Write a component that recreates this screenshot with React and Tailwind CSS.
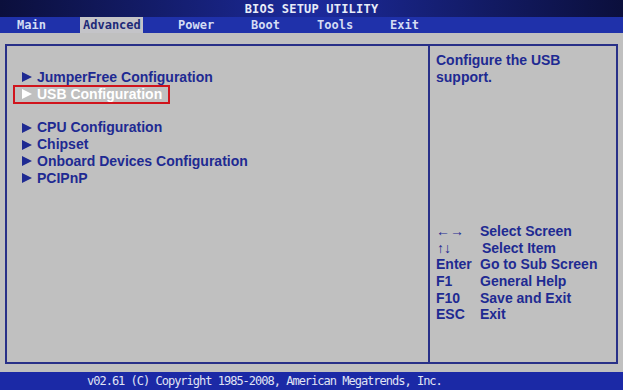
import React from 'react';

const tabs = [
    { name: 'Main', pl: 'pl-[17px]', w: 'w-[80px]' },
    { name: 'Advanced', pl: 'pl-[3px]', w: 'w-[63px]', active: true },
    { name: 'Power', pl: 'pl-[35px]', w: 'w-[108px]' },
    { name: 'Boot', pl: 'pl-0', w: 'w-[66px]' },
    { name: 'Tools', pl: 'pl-0', w: 'w-[73px]' },
    { name: 'Exit', pl: 'pl-0', w: 'w-[60px]' },
];

const Arrow = ({ color }) => (
    <svg width="10" height="10" viewBox="0 0 10 10" className="shrink-0">
        <polygon points="0,0 10,5 0,10" fill={color} />
    </svg>
);

const MenuItem = ({ label, selected }) => (
    <div className="h-[16.8px] flex items-center">
        {selected ? (
            <div className="flex items-center gap-[5px] ml-[-9px] pl-[7px] pr-[6px] h-[19px] border-2 border-[#d0141c] text-white">
                <Arrow color="#ffffff" />
                <span>{label}</span>
            </div>
        ) : (
            <div className="flex items-center gap-[5px]">
                <Arrow color="#1e2a92" />
                <span>{label}</span>
            </div>
        )}
    </div>
);

const keys = [
    ['←→', 'Select Screen', 'font-normal text-[14px]'],
    ['↑↓', 'Select Item', 'font-normal text-[14px] pl-[1px]'],
    ['Enter', 'Go to Sub Screen', ''],
    ['F1', 'General Help', ''],
    ['F10', 'Save and Exit', ''],
    ['ESC', 'Exit', ''],
];

export default function App() {
    const mono = { fontFamily: '"DejaVu Sans Mono", monospace' };
    return (
        <div className="w-[623px] h-[390px] flex flex-col bg-[#c0c0c0] overflow-hidden">
            {/* title */}
            <div
                className="h-[17px] flex items-center justify-center bg-linear-to-r from-[#0b0f3c] via-[#1c2a9c] to-[#0b0f3c] text-[#e8ecf8] font-bold text-[12px] tracking-[0.2px]"
                style={mono}
            >
                BIOS SETUP UTILITY
            </div>
            {/* tabs */}
            <div className="h-[16px] flex bg-[#1f31aa] text-[12px] font-bold" style={mono}>
                {tabs.map((t) => (
                    <div
                        key={t.name}
                        className={`${t.w} ${t.pl} h-full flex items-center ${t.active ? 'bg-[#c4c4c8] text-[#1e2a78]' : 'text-[#d4dcf4]'}`}
                    >
                        {t.name}
                    </div>
                ))}
            </div>
            {/* main */}
            <div className="flex-1 pt-[11px] pl-[5px] pr-[5px] pb-[8px]">
                <div
                    className="h-full flex border-2 border-[#283088] text-[#1e2a92] font-bold text-[14px]"
                    style={{ fontFamily: '"Liberation Sans", Arial, sans-serif' }}
                >
                    <div className="w-[423px] border-r-2 border-[#283088] pt-[23px] pl-[15px] leading-[17px]">
                        <MenuItem label="JumperFree Configuration" />
                        <MenuItem label="USB Configuration" selected />
                        <div className="h-[16.8px]" />
                        <MenuItem label="CPU Configuration" />
                        <MenuItem label="Chipset" />
                        <MenuItem label="Onboard Devices Configuration" />
                        <MenuItem label="PCIPnP" />
                    </div>
                    <div className="flex-1 flex flex-col pt-[6px] pl-[6px] pb-[39px] leading-[17px]">
                        <div>
                            Configure the USB
                            <br />
                            support.
                        </div>
                        <div className="mt-auto">
                            {keys.map(([k, v, cls]) => (
                                <div key={v} className="flex h-[16.6px] items-center">
                                    <span className={`w-[44px] ${cls}`}>{k}</span>
                                    <span className={k === '↑↓' ? 'pl-[2px]' : ''}>{v}</span>
                                </div>
                            ))}
                        </div>
                    </div>
                </div>
            </div>
            {/* footer */}
            <div
                className="h-[18px] flex items-center pl-[87px] bg-[#1b29a6] text-[#e0e4f4] text-[12px] tracking-[-1px]"
                style={mono}
            >
                v02.61 (C) Copyright 1985-2008, American Megatrends, Inc.
            </div>
        </div>
    );
}
